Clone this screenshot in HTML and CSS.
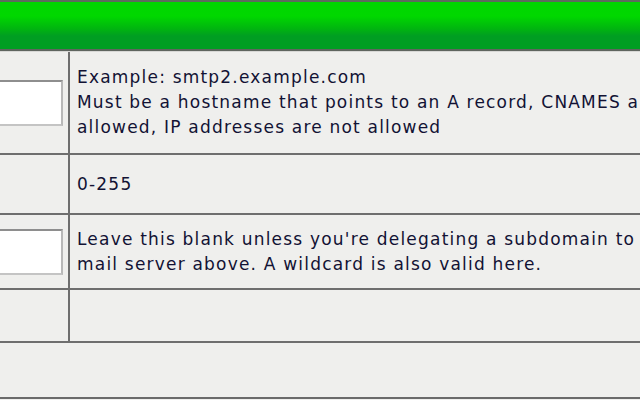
FILE: index.html
```html
<!DOCTYPE html>
<html>
<head>
<meta charset="utf-8">
<link rel="stylesheet" href="styles.css">
</head>
<body>
<div class="page">
  <div class="header"></div>
  <div class="table">
    <div class="row r1">
      <div class="cell left"><span class="input"></span></div>
      <div class="cell right">
        <div class="line">Example: smtp2.example.com</div>
        <div class="line">Must be a hostname that points to an A record, CNAMES are not</div>
        <div class="line">allowed, IP addresses are not allowed</div>
      </div>
    </div>
    <div class="row r2">
      <div class="cell left"></div>
      <div class="cell right">
        <div class="line">0-255</div>
      </div>
    </div>
    <div class="row r3">
      <div class="cell left"><span class="input"></span></div>
      <div class="cell right">
        <div class="line">Leave this blank unless you're delegating a subdomain to this</div>
        <div class="line">mail server above. A wildcard is also valid here.</div>
      </div>
    </div>
    <div class="row r4">
      <div class="cell left"></div>
      <div class="cell right"></div>
    </div>
    <div class="footer"></div>
  </div>
</div>
</body>
</html>
```

FILE: styles.css
```css
html, body {
  margin: 0;
  padding: 0;
  background: #efefed;
  overflow: hidden;
}
.page {
  width: 640px;
  height: 400px;
  overflow: hidden;
  font-family: "DejaVu Sans", Verdana, sans-serif;
  font-size: 17px;
  letter-spacing: 1.2px;
  color: #121234;
}
.header {
  height: 47px;
  border-top: 2px solid #5e6a5e;
  border-bottom: 2px solid #5f655f;
  background: linear-gradient(to bottom, #00d600 0px, #00d800 14px, #00b410 27px, #009e22 34px, #009e22 47px);
}
.table {
  display: flex;
  flex-direction: column;
  border-top: 1px solid #d8d8d6;
}
.row {
  display: flex;
  border-bottom: 2px solid #6e6e6e;
}
.r1 { height: 101px; }
.r2 { height: 58px; }
.r3 { height: 73px; }
.r4 { height: 51px; }
.footer {
  height: 54px;
  border-bottom: 2px solid #6a6a6a;
}
.cell {
  display: flex;
  flex-direction: column;
  justify-content: center;
}
.left {
  flex: none;
  border-right: 2px solid #6e6e6e;
  align-items: flex-end;
  overflow: hidden;
  padding-right: 5px;
  box-sizing: border-box;
  width: 70px;
}
.right {
  flex: 1;
  padding-left: 7px;
  white-space: nowrap;
  overflow: hidden;
}
.line {
  line-height: 25px;
}
.input {
  display: block;
  width: 120px;
  height: 42px;
  flex: none;
  background: #ffffff;
  border: 2px solid #8e8e8e;
  border-right-color: #b8b8b8;
  border-bottom-color: #c4c4c4;
}
```
